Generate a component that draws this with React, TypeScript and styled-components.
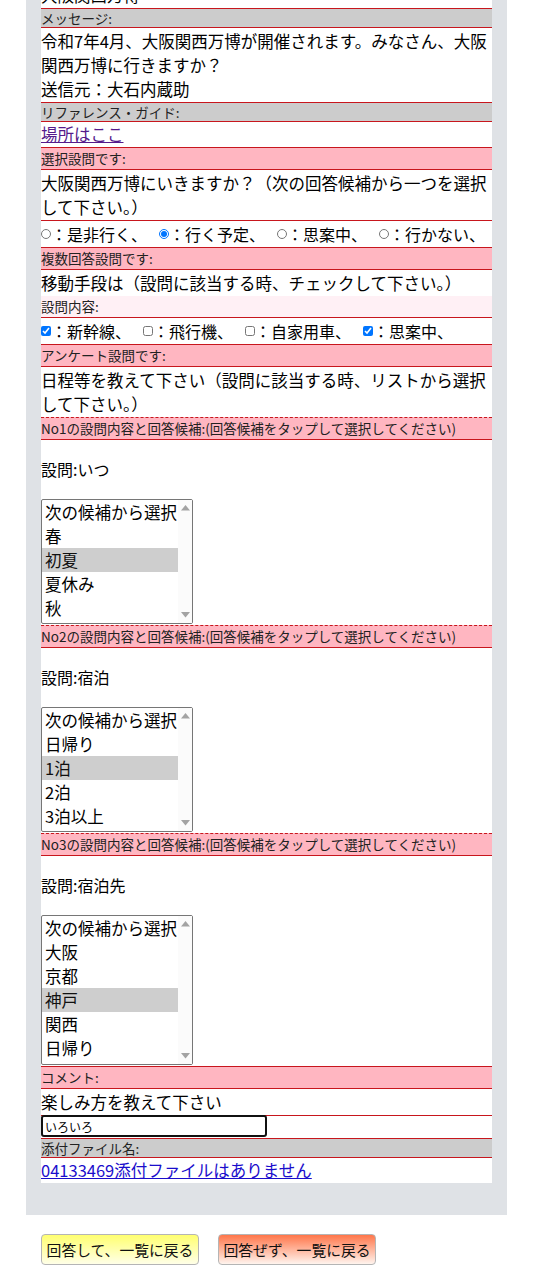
import React from 'react';
import styled, { createGlobalStyle, css } from 'styled-components';

const RED = '#c8161d';

const GlobalStyle = createGlobalStyle`
  html, body { margin: 0; padding: 0; background: #ffffff; }
  body {
    font-family: "Noto Sans CJK JP", "Noto Sans", sans-serif;
    color: #000;
  }
`;

const Page = styled.div`
  width: 543px;
  overflow: hidden;
`;

const Panel = styled.div`
  margin: -18px 36px 0 26px;
  padding: 0 15px 32px;
  background: #dfe2e6;
`;

const Sheet = styled.div`
  background: #ffffff;
`;

type Tone = 'gray' | 'pink' | 'blush';
const toneBg: Record<Tone, string> = { gray: '#cccccc', pink: '#ffb6c1', blush: '#fff0f5' };

const Label = styled.div<{ $tone: Tone; $top?: 'dashed' | 'solid' }>`
  background: ${p => toneBg[p.$tone]};
  font-size: 13.5px;
  line-height: ${p => (p.$tone === 'gray' ? '18px' : '21px')};
  color: #222;
  white-space: nowrap;
  border-bottom: 1px solid ${RED};
  ${p => p.$top && css`border-top: 1px ${p.$top} ${RED};`}
`;

const TextRow = styled.div<{ $open?: boolean }>`
  font-size: 16.5px;
  line-height: 24px;
  padding: 1px 0;
  border-bottom: ${p => (p.$open ? 'none' : `1px solid ${RED}`)};
`;

const LinkRow = styled.div<{ $open?: boolean }>`
  font-size: 16.5px;
  line-height: 25px;
  border-bottom: ${p => (p.$open ? 'none' : `1px solid ${RED}`)};
`;

const Link = styled.a<{ $visited?: boolean }>`
  color: ${p => (p.$visited ? '#551a8b' : '#1a0dcc')};
  text-decoration: underline;
`;

const ChoiceRow = styled.div`
  display: flex;
  align-items: center;
  height: 26px;
  font-size: 16px;
  white-space: nowrap;
  border-bottom: 1px solid ${RED};
`;

const Choice = styled.label`
  display: inline-flex;
  align-items: center;
  margin-right: 12px;
`;

const Mark = styled.input`
  width: 10px;
  height: 10px;
  margin: 0;
`;

const Question = styled.div`
  font-size: 16px;
  line-height: 24px;
  padding: 17px 0 18px;
`;

const ListFrame = styled.div`
  position: relative;
  width: 152px;
  margin-bottom: 1px;
`;

const ListBox = styled.select<{ $rows: number }>`
  display: block;
  box-sizing: border-box;
  width: 152px;
  height: ${p => Math.round(p.$rows * 24.6 + 2)}px;
  margin: 0;
  padding: 0;
  border: 1px solid #767676;
  background: #fff;
  color: #000;
  font-family: "Noto Sans CJK JP", sans-serif;
  font-size: 16.5px;
  overflow: hidden;
  option {
    padding: 0 3px;
  }
`;

const ScrollTrack = styled.div`
  position: absolute;
  top: 1px;
  right: 1px;
  bottom: 1px;
  width: 14px;
  background: #fbfbfb;
  display: flex;
  flex-direction: column;
  justify-content: space-between;
  align-items: center;
  padding: 5px 0;
  box-sizing: border-box;
`;

const Arrow = ({ down }: { down?: boolean }) => (
  <svg width="9" height="6" viewBox="0 0 9 6">
    <polygon points={down ? '0,0 9,0 4.5,5.5' : '0,5.5 9,5.5 4.5,0'} fill="#a3a3a3" />
  </svg>
);

const CommentRow = styled.div`
  padding-bottom: 1px;
  border-bottom: 1px solid ${RED};
`;

const CommentInput = styled.input`
  display: block;
  box-sizing: border-box;
  width: 226px;
  height: 22px;
  margin: -1px 0 0;
  padding: 0 2px;
  border: 2px solid #111;
  border-radius: 3px;
  outline: none;
  background: #fff;
  color: #000;
  font-family: "Noto Sans CJK JP", sans-serif;
  font-size: 12px;
`;

const ButtonBar = styled.div`
  display: flex;
  gap: 19px;
  padding: 19px 0 10px 41px;
`;

const ActionButton = styled.button<{ $tone: 'answer' | 'skip' }>`
  box-sizing: border-box;
  width: 158px;
  height: 31px;
  padding: 0;
  border: 1px solid #b5b5b5;
  border-radius: 4px;
  color: #111;
  font-family: "Noto Sans CJK JP", sans-serif;
  font-size: 14.8px;
  background: ${p =>
    p.$tone === 'answer'
      ? 'linear-gradient(#ffff70, #ffffe8)'
      : 'linear-gradient(#ff764a, #fff4ee)'};
`;

type ListQ = { no: number; title: string; options: string[]; selected: string; size: number };

const lists: ListQ[] = [
  { no: 1, title: '設問:いつ', options: ['次の候補から選択', '春', '初夏', '夏休み', '秋', '冬'], selected: '初夏', size: 5 },
  { no: 2, title: '設問:宿泊', options: ['次の候補から選択', '日帰り', '1泊', '2泊', '3泊以上', 'その他'], selected: '1泊', size: 5 },
  { no: 3, title: '設問:宿泊先', options: ['次の候補から選択', '大阪', '京都', '神戸', '関西', '日帰り', 'その他'], selected: '神戸', size: 6 },
];

const radios = [
  { label: '：是非行く、', checked: false },
  { label: '：行く予定、', checked: true },
  { label: '：思案中、', checked: false },
  { label: '：行かない、', checked: false },
];

const checks = [
  { label: '：新幹線、', checked: true },
  { label: '：飛行機、', checked: false },
  { label: '：自家用車、', checked: false },
  { label: '：思案中、', checked: true },
];

export default function App() {
  return (
    <Page>
      <GlobalStyle />
      <Panel>
        <Sheet>
          <TextRow>大阪関西万博</TextRow>
          <Label $tone="gray">メッセージ:</Label>
          <TextRow>
            令和7年4月、大阪関西万博が開催されます。みなさん、大阪関西万博に行きますか？
            <br />
            送信元：大石内蔵助
          </TextRow>
          <Label $tone="gray">リファレンス・ガイド:</Label>
          <LinkRow>
            <Link $visited href="#place">場所はここ</Link>
          </LinkRow>
          <Label $tone="pink">選択設問です:</Label>
          <TextRow>大阪関西万博にいきますか？（次の回答候補から一つを選択して下さい。）</TextRow>
          <ChoiceRow>
            {radios.map(r => (
              <Choice key={r.label}>
                <Mark type="radio" name="go" defaultChecked={r.checked} />
                {r.label}
              </Choice>
            ))}
          </ChoiceRow>
          <Label $tone="pink">複数回答設問です:</Label>
          <TextRow $open>移動手段は（設問に該当する時、チェックして下さい。）</TextRow>
          <Label $tone="blush">設問内容:</Label>
          <ChoiceRow>
            {checks.map(c => (
              <Choice key={c.label}>
                <Mark type="checkbox" defaultChecked={c.checked} />
                {c.label}
              </Choice>
            ))}
          </ChoiceRow>
          <Label $tone="pink">アンケート設問です:</Label>
          <TextRow $open>日程等を教えて下さい（設問に該当する時、リストから選択して下さい。）</TextRow>
          {lists.map(q => (
            <React.Fragment key={q.no}>
              <Label $tone="pink" $top="dashed">
                No{q.no}の設問内容と回答候補:(回答候補をタップして選択してください)
              </Label>
              <Question>{q.title}</Question>
              <ListFrame>
                <ListBox size={q.size} $rows={q.size} defaultValue={q.selected}>
                  {q.options.map(o => (
                    <option key={o} value={o}>{o}</option>
                  ))}
                </ListBox>
                <ScrollTrack>
                  <Arrow />
                  <Arrow down />
                </ScrollTrack>
              </ListFrame>
            </React.Fragment>
          ))}
          <Label $tone="pink" $top="solid">コメント:</Label>
          <TextRow>楽しみ方を教えて下さい</TextRow>
          <CommentRow>
            <CommentInput type="text" defaultValue="いろいろ" autoFocus />
          </CommentRow>
          <Label $tone="gray">添付ファイル名:</Label>
          <LinkRow $open>
            <Link href="#file">04133469添付ファイルはありません</Link>
          </LinkRow>
        </Sheet>
      </Panel>
      <ButtonBar>
        <ActionButton $tone="answer">回答して、一覧に戻る</ActionButton>
        <ActionButton $tone="skip">回答ぜず、一覧に戻る</ActionButton>
      </ButtonBar>
    </Page>
  );
}
